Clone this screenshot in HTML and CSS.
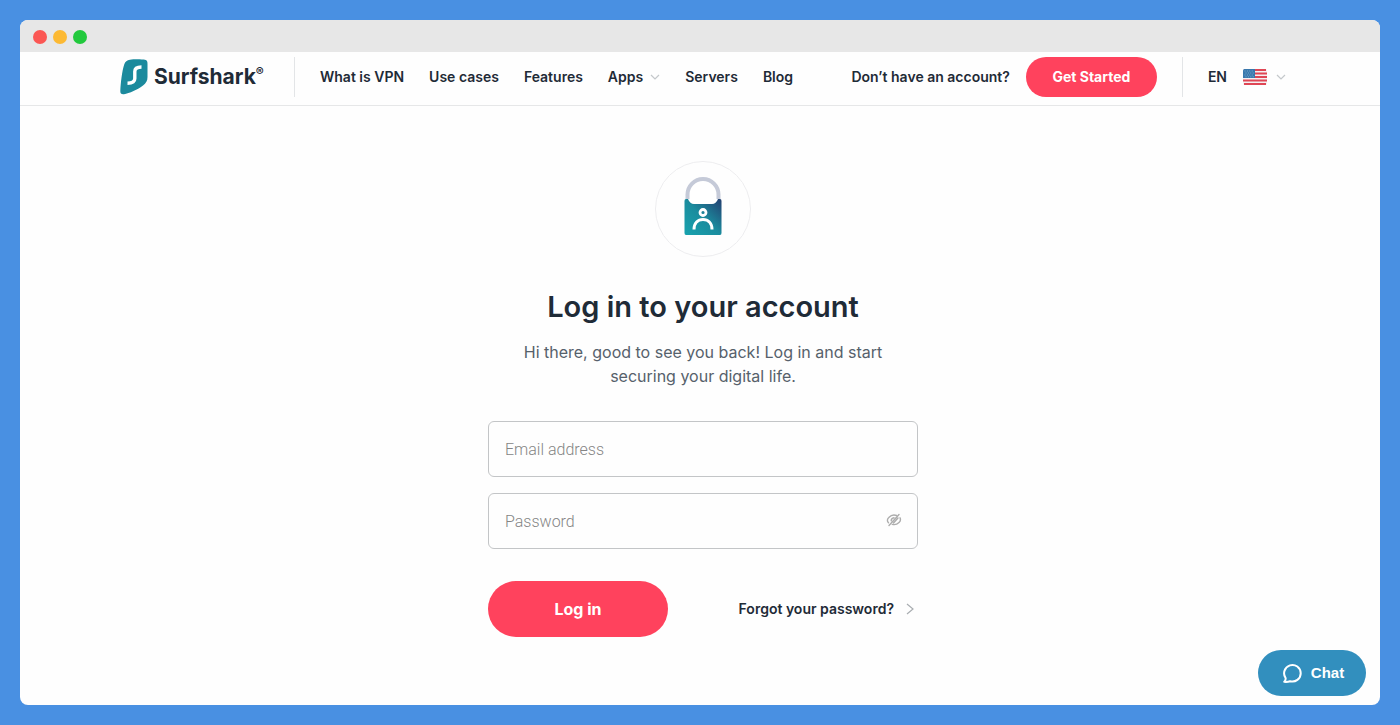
FILE: index.html
```html
<!DOCTYPE html>
<html lang="en">
<head>
<meta charset="utf-8">
<meta name="viewport" content="width=device-width, initial-scale=1">
<title>Log in to your account</title>
<link rel="stylesheet" href="styles.css">
</head>
<body>
<div class="window">
  <div class="titlebar">
    <span class="dot dot-red"></span>
    <span class="dot dot-yellow"></span>
    <span class="dot dot-green"></span>
  </div>
  <header class="header">
    <a class="logo" href="#">
      <svg class="logo-mark" width="28" height="36" viewBox="0 0 28 36" aria-hidden="true">
        <path d="M10 .8C14 0 22 .2 25 .8 27 1.200 27.500 2.500 27.500 5V18C27.500 22 26 24 23 26.500 18 30.500 9 34.500 4 35.200 1.500 35.500.2 34.500.3 32 .7 24 2 12 4.200 5.500 5.200 2.500 7 1.300 10 .8Z" fill="#1b8a9d"/>
        <path d="M21.500 8C17.500 8 14.800 9.200 14.800 12.500V19.500C14.800 22.800 12 24.200 7.500 24.200" fill="none" stroke="#fff" stroke-width="3.400"/>
      </svg>
      <span class="logo-name">Surfshark<sup class="logo-reg">®</sup></span>
    </a>
    <nav class="nav">
      <a href="#">What is VPN</a>
      <a href="#">Use cases</a>
      <a href="#">Features</a>
      <a class="with-chevron" href="#">Apps
        <svg width="10" height="6" viewBox="0 0 10 6" aria-hidden="true"><path d="M1 1l4 4 4-4" fill="none" stroke="#c4c8cb" stroke-width="1.200"/></svg>
      </a>
      <a href="#">Servers</a>
      <a href="#">Blog</a>
    </nav>
    <div class="account">
      <span>Don’t have an account?</span>
      <a class="get-started" href="#">Get Started</a>
    </div>
    <button class="language" type="button">
      <span>EN</span>
      <svg class="flag" width="24" height="16" viewBox="0 0 24 16" aria-hidden="true">
        <rect width="24" height="16" rx="1.500" fill="#f4f0f2"/>
        <path d="M1 1H23M0 4.500H24M0 8H24M0 11.500H24M1 15H23" stroke="#df4655" stroke-width="1.900"/>
        <path d="M0 1.500Q0 0 1.500 0H12V9H0Z" fill="#3878ad"/>
        <path d="M1.500 2H11M2.500 4H12M1.500 6H11M2.500 7.800H12" stroke="#8fb9d6" stroke-width=".8" stroke-dasharray="1 1.400"/>
      </svg>
      <svg width="10" height="6" viewBox="0 0 10 6" aria-hidden="true"><path d="M1 1l4 4 4-4" fill="none" stroke="#c4c8cb" stroke-width="1.200"/></svg>
    </button>
  </header>
  <main class="main">
    <div class="badge">
      <svg width="40" height="60" viewBox="0 0 40 60" aria-hidden="true">
        <defs>
          <linearGradient id="lock-body" x1="0" y1="1" x2="1" y2="0">
            <stop offset="0" stop-color="#18a3ae"/>
            <stop offset=".5" stop-color="#1b8c9e"/>
            <stop offset="1" stop-color="#233f70"/>
          </linearGradient>
        </defs>
        <path d="M3 22H37Q38.500 22 38.500 24V56Q38.500 58 37 58H3Q1.500 58 1.500 56V24Q1.500 22 3 22Z" fill="url(#lock-body)"/>
        <path d="M5 22V17A15 15 0 0 1 35 17V22Q33 27 29 27H11Q7 27 5 22Z" fill="#fff"/>
        <path d="M4.500 22V17.500A15.500 15.500 0 0 1 35.500 17.500V22" fill="none" stroke="#c5cad8" stroke-width="4"/>
        <circle cx="20" cy="35.500" r="3" fill="none" stroke="#fff" stroke-width="2.800"/>
        <path d="M11 52.500C11 46 15 42.500 20 42.500S29 46 29 52.500" fill="none" stroke="#fff" stroke-width="3"/>
      </svg>
    </div>
    <h1 class="title">Log in to your account</h1>
    <p class="intro">Hi there, good to see you back! Log in and start securing your digital life.</p>
    <form class="form">
      <input class="field" type="email" placeholder="Email address" aria-label="Email address">
      <div class="password">
        <input class="field" type="password" placeholder="Password" aria-label="Password">
        <button class="reveal" type="button" aria-label="Show password">
          <svg width="16" height="14" viewBox="0 0 16 14" aria-hidden="true">
            <g fill="none" stroke="#adadad" stroke-width="1.400" stroke-linecap="round">
              <path d="M2.500 9.800C.8 8 1.200 6 2.800 4.500 5 2.200 8 1.600 10.500 2.500"/>
              <path d="M14 4.800C14.800 6.500 14.500 8.200 13 9.600 11 11.500 8.600 12 6.300 11.400"/>
              <path d="M3 12.500L13 1.500M5.200 7.800C5.200 6 6.300 4.900 8 4.700M7.500 10L12 5"/>
            </g>
          </svg>
        </button>
      </div>
      <div class="actions">
        <button class="submit" type="submit">Log in</button>
        <a class="forgot" href="#">Forgot your password?
          <svg width="8" height="12" viewBox="0 0 8 12" aria-hidden="true"><path d="M1 1l6 5-6 5" fill="none" stroke="#a9adb1" stroke-width="1.200"/></svg>
        </a>
      </div>
    </form>
  </main>
  <button class="chat" type="button">
    <svg width="20" height="20" viewBox="0 0 20 20" aria-hidden="true"><path d="M1.200 18.800C2.500 17.800 2.800 16.500 2.600 15A8.300 8.300 0 1 1 7 18.200C5.500 18.800 3.500 19 1.200 18.800Z" fill="none" stroke="#fff" stroke-width="2" stroke-linejoin="round"/></svg>
    Chat
  </button>
</div>
</body>
</html>
```
FILE: styles.css
```css
* {
  box-sizing: border-box;
}

body {
  margin: 0;
  min-height: 100vh;
  padding: 20px;
  display: flex;
  background: #4990e2;
  color: #1f2b37;
  font: 600 14px/20px Inter, "Liberation Sans", sans-serif;
}

a {
  color: inherit;
  text-decoration: none;
}

button {
  border: 0;
  font: inherit;
  color: inherit;
  cursor: pointer;
}

svg {
  display: block;
  flex: none;
}

.window {
  flex: 1;
  position: relative;
  display: flex;
  flex-direction: column;
  border-radius: 8px;
  background: #fefefe;
  overflow: hidden;
}

.titlebar {
  display: flex;
  align-items: center;
  gap: 6px;
  height: 32px;
  padding: 2px 13px 0;
  background: #e7e7e7;
}

.dot {
  width: 14px;
  height: 14px;
  border-radius: 50%;
}

.dot-red { background: #fb5754; }
.dot-yellow { background: #fcb933; }
.dot-green { background: #22c93d; }

.header {
  display: flex;
  align-items: center;
  height: 54px;
  padding: 0 94px 4px 100px;
  border-bottom: 1px solid #e6e7e8;
  white-space: nowrap;
}

.logo {
  display: flex;
  align-items: center;
  gap: 6px;
  width: 175px;
  height: 40px;
  border-right: 1px solid #e3e5e7;
}

.logo-name {
  display: flex;
  font-size: 21px;
  font-weight: 700;
  line-height: 24px;
}

.logo-reg {
  font-size: 12px;
  line-height: 14px;
}

.nav {
  display: flex;
  gap: 25px;
  margin-left: 25px;
}

.with-chevron {
  display: flex;
  align-items: center;
  gap: 7px;
}

.account {
  display: flex;
  align-items: center;
  gap: 16px;
  margin-left: auto;
}

.get-started {
  width: 131px;
  border-radius: 20px;
  background: #ff425d;
  color: #fff;
  font-weight: 700;
  line-height: 40px;
  text-align: center;
}

.language {
  display: flex;
  align-items: center;
  height: 40px;
  margin-left: 25px;
  padding: 0 0 0 25px;
  border-left: 1px solid #e3e5e7;
  background: none;
}

.flag {
  margin: 0 9px 0 16px;
}

.main {
  display: flex;
  flex-direction: column;
  align-items: center;
  padding: 55px 0 60px 6px;
}

.badge {
  display: flex;
  justify-content: center;
  width: 96px;
  height: 96px;
  padding-top: 15px;
  border: 1px solid #ededef;
  border-radius: 50%;
}

.title {
  margin: 30px 0 0;
  font-size: 29px;
  font-weight: 600;
  line-height: 40px;
}

.intro {
  max-width: 400px;
  margin: 13px 0 0;
  color: #56616b;
  font-size: 16px;
  font-weight: 400;
  line-height: 24px;
  text-align: center;
}

.form {
  display: flex;
  flex-direction: column;
  gap: 16px;
  width: 100%;
  max-width: 430px;
  margin-top: 33px;
}

.field {
  display: block;
  width: 100%;
  height: 56px;
  padding: 1px 16px 0;
  border: 1px solid #c3c5c7;
  border-radius: 6px;
  background: #fefefe;
  color: #1f2b37;
  font: 300 16px/24px Roboto, sans-serif;
}

.field::placeholder {
  color: #858585;
  opacity: 1;
}

.password {
  position: relative;
}

.reveal {
  position: absolute;
  top: 12px;
  right: 8px;
  padding: 8px;
  background: none;
}

.actions {
  display: flex;
  align-items: center;
  justify-content: space-between;
  margin-top: 16px;
}

.submit {
  width: 180px;
  height: 56px;
  border-radius: 28px;
  background: #ff425d;
  color: #fff;
  font-size: 16px;
  font-weight: 700;
}

.forgot {
  display: flex;
  align-items: center;
  gap: 12px;
  padding-right: 4px;
}

.chat {
  position: absolute;
  right: 14px;
  bottom: 9px;
  display: flex;
  align-items: center;
  justify-content: center;
  gap: 8px;
  width: 108px;
  height: 46px;
  padding: 0 0 0 3px;
  border-radius: 23px;
  background: #328fbe;
  color: #fff;
  font: bold 15px/20px "Liberation Sans", sans-serif;
}
```
